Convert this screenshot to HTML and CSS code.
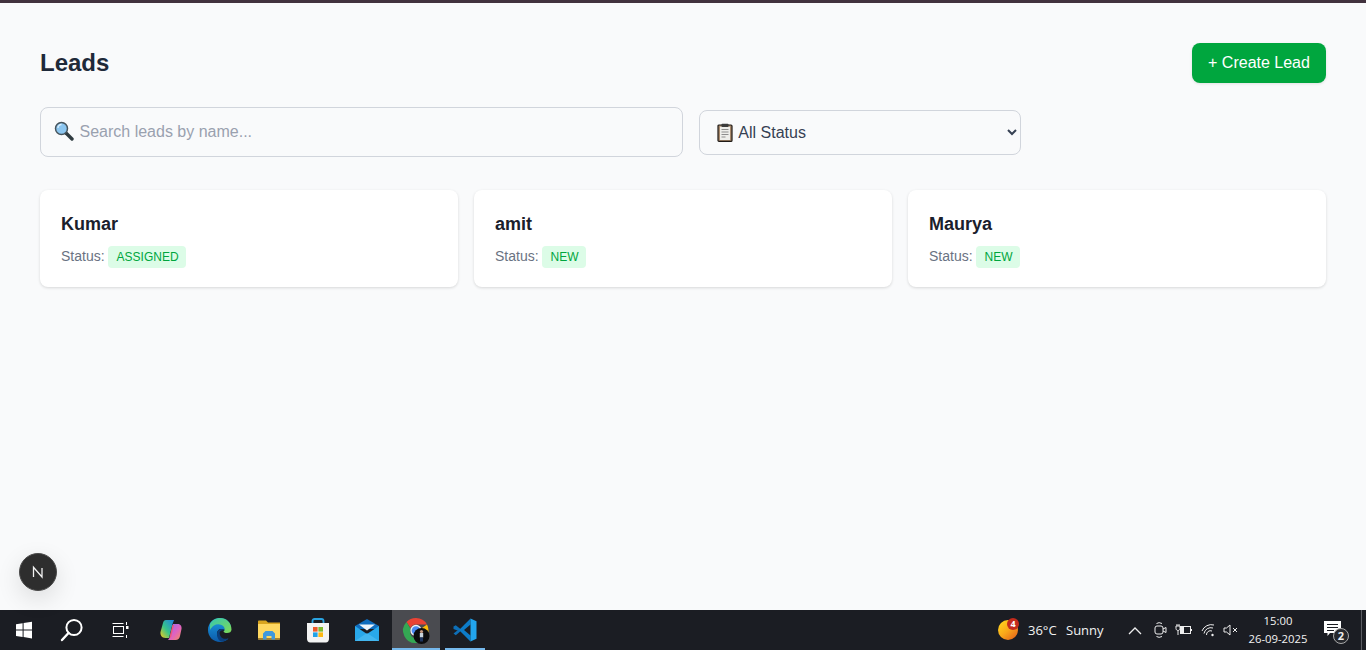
FILE: index.html
```html
<!DOCTYPE html>
<html lang="en">
<head>
<meta charset="utf-8">
<title>Leads</title>
<link rel="stylesheet" href="styles.css">
</head>
<body>
<div class="screen">
  <main class="page">
    <header class="head">
      <h1 class="title">Leads</h1>
      <button class="create">+ Create Lead</button>
    </header>
    <div class="filters">
      <div class="search">
        <svg class="emoji" width="20" height="20" viewBox="0 0 20 20"><path d="M12 12l6 6" stroke="#2f3b40" stroke-width="3.4" stroke-linecap="round"/><circle cx="7.500" cy="7.500" r="6" fill="#8cc6f0" stroke="#46545c" stroke-width="1.500"/><path d="M4 7A3.500 3.500 0 0 1 7.500 3.500" stroke="#d9efff" stroke-width="1.300" fill="none"/></svg>
        <input class="search-input" type="text" placeholder="Search leads by name...">
      </div>
      <div class="status">
        <svg class="emoji clip" width="16" height="19" viewBox="0 0 16 19"><rect x="1" y="2" width="14" height="16.4" rx="1" fill="#a98a6c" stroke="#1f1a16" stroke-width="1.2"/><rect x="3" y="3.6" width="10" height="13.4" fill="#eeeeea"/><rect x="4.5" y="0.8" width="7" height="3.2" rx=".8" fill="#3b3b3b"/><path d="M4.5 6.5h7M4.5 9h7M4.5 11.5h7M4.5 14h4" stroke="#8d8d8d" stroke-width="1.1"/></svg>
        <select class="status-select"><option>All Status</option></select>
      </div>
    </div>
    <section class="cards">
      <article class="card"><h2 class="name">Kumar</h2><p class="line">Status: <span class="badge">ASSIGNED</span></p></article>
      <article class="card"><h2 class="name">amit</h2><p class="line">Status: <span class="badge">NEW</span></p></article>
      <article class="card"><h2 class="name">Maurya</h2><p class="line">Status: <span class="badge">NEW</span></p></article>
    </section>
    <div class="dev"><svg width="14" height="14" viewBox="0 0 14 14"><path d="M2.5 12V2.3L11 12V3" fill="none" stroke="#f2f2f2" stroke-width="1.3"/></svg></div>
  </main>

  <footer class="taskbar">
    <div class="tb" ><svg width="18" height="18" viewBox="0 0 18 18"><path fill="#fff" d="M1 3.2l6.600-1v6.300H1zM8.600 2l8.400-1.300v7.800H8.600zM1 9.600h6.600v6.300l-6.600-1zM8.600 9.600H17v7.800l-8.400-1.300z"/></svg></div>
    <div class="tb"><svg width="24" height="24" viewBox="0 0 24 24"><circle cx="14" cy="9.500" r="7.600" fill="none" stroke="#fff" stroke-width="2"/><path d="M8.500 15L2 22" stroke="#fff" stroke-width="2.400" stroke-linecap="round"/></svg></div>
    <div class="tb tb-last"><svg width="18" height="18" viewBox="0 0 18 18" fill="none" stroke="#fff" stroke-width="1"><path d="M1.500 2.500h11M1.500 15.500h11"/><rect x="2.500" y="5.500" width="10" height="7"/><path d="M15.500 1v3M15.500 14v3"/><rect x="15" y="5" width="2.500" height="3" fill="#fff" stroke="none"/></svg></div>

    <div class="app"><svg width="24" height="24" viewBox="0 0 24 24"><defs><linearGradient id="co1" x1="0" y1="1" x2="1" y2="0"><stop offset="0" stop-color="#f7c91b"/><stop offset=".45" stop-color="#37c48a"/><stop offset="1" stop-color="#1f7fe6"/></linearGradient><linearGradient id="co2" x1="0" y1="0" x2="1" y2="1"><stop offset="0" stop-color="#8f6cf5"/><stop offset=".55" stop-color="#e062c0"/><stop offset="1" stop-color="#f4915a"/></linearGradient></defs><path fill="url(#co1)" d="M7 2h8l-1.500 4-3.500 14H6.500C3 20 1 17 1.500 14L4 5c.4-1.800 1.500-3 3-3z"/><path fill="url(#co2)" d="M14 6h5c2.500 0 4 2.500 3.500 5L21 18c-.5 2.500-2 4-4.500 4H9l1.500-2z"/><path fill="#f0587a" d="M13.500 7l-3 12.500h1.500L15 7z"/></svg></div>
    <div class="app"><svg width="26" height="26" viewBox="0 0 26 26"><defs><linearGradient id="ed1" x1="0" y1="0" x2="1" y2="1"><stop offset="0" stop-color="#36c6b0"/><stop offset="1" stop-color="#7fdc56"/></linearGradient><linearGradient id="ed2" x1="0" y1="0" x2="0" y2="1"><stop offset="0" stop-color="#1b9de2"/><stop offset="1" stop-color="#0c5aa8"/></linearGradient></defs><path fill="url(#ed2)" d="M13 1C6 1 1 6.500 1 13c0 7 5.500 12 12 12 3.500 0 6.500-1.300 8.500-3.500-5 2-11 .5-11.500-4.500-.3-3 2-5 4-5 3 0 6 2 10 1V11C24 5 19 1 13 1z"/><path fill="url(#ed1)" d="M3 7C5 3 9 1 13 1c6 0 11.500 4.500 11.500 11.500 0 2.500-2 3.500-4.500 3.500-2 0-3.500-.6-3.500-1.500 1.500-1 1.500-3 .5-4.500C15 7 10 6.500 7 8.500 5.500 9.500 4 11 3 13z"/><path fill="#0b3f7c" d="M10 17c0-3 2-5 4.500-5 1.200 0 2.300.5 3 1.500-1.500-.5-3-.5-4 .5-1.500 1.500-1 4.500 1 6.500 1.500 1.200 3.500 1.800 7 .8C19 24 15.500 25 13 24c-2-1.500-3-4-3-7z"/></svg></div>
    <div class="app"><svg width="24" height="24" viewBox="0 0 24 24"><path fill="#d9a520" d="M1 3.500C1 3 1.400 2.500 2 2.500h7l2 2h12V8H1z"/><path fill="#ffd861" d="M1 6h22v14.500c0 .5-.4 1-1 1H2c-.6 0-1-.4-1-1z"/><path fill="#a8812f" d="M1 20h22v1.500H1z"/><path fill="#3f98dd" d="M6 21.500v-6l2.500-2.500h7l2.500 2.500v6h-3.500v-3.500h-5v3.500z"/></svg></div>
    <div class="app"><svg width="24" height="26" viewBox="0 0 24 26"><path d="M6.500 7V4c0-1.300 1-2 2-2h7c1 0 2 .7 2 2v3" fill="none" stroke="#2aa3e0" stroke-width="1.800"/><path fill="#f3f3f3" d="M1 6h22v16c0 2-1.300 3.400-3.200 3.400H4.200C2.300 25.400 1 24 1 22z"/><rect x="7" y="10" width="4.600" height="4.600" fill="#ef5a2a"/><rect x="12.400" y="10" width="4.600" height="4.600" fill="#7fba2e"/><rect x="7" y="15.400" width="4.600" height="4.600" fill="#1fa2e8"/><rect x="12.400" y="15.400" width="4.600" height="4.600" fill="#fdb813"/></svg></div>
    <div class="app"><svg width="26" height="24" viewBox="0 0 26 24"><path fill="#0f6cbd" d="M1 8L13 1l12 7v3H1z"/><path fill="#eef4fb" d="M5 6.500h16l-8 6z"/><path fill="#29a8ea" d="M1 8l12 8 12-8v15H1z"/><path fill="#55c0f2" d="M1 23l12-8 12 8z" opacity=".6"/></svg></div>
    <div class="app active-chrome"><svg width="32" height="32" viewBox="-2 -4 32 32"><path fill="#ea4335" d="M14 1a12.500 12.500 0 0 1 11 6.500H14a6 6 0 0 0-5.500 3.500L4.500 5A12.500 12.500 0 0 1 14 1z"/><path fill="#fbbc05" d="M25 7.500A12.500 12.500 0 0 1 15 26l5-8a6 6 0 0 0 0-7z"/><path fill="#34a853" d="M4.500 5A12.500 12.500 0 0 0 15 26l4.500-8a6 6 0 0 1-10.800-6z"/><circle cx="14" cy="13.500" r="5" fill="#4a8af4" stroke="#f2f2f2" stroke-width="1.300"/><circle cx="19.500" cy="19" r="8" fill="#0c0c0e"/><circle cx="19.500" cy="14.500" r="1.600" fill="#c89a80"/><rect x="17.800" y="16" width="3.400" height="4.500" fill="#c8d2dc"/><rect x="18" y="20.500" width="3" height="4" fill="#1e3560"/></svg></div>
    <div class="app active-code"><svg width="26" height="26" viewBox="0 0 26 26"><path fill="#0d6fb8" d="M1.500 9.500l2.300-1.300 5 4-1.500 2-5.800-2.200zM1.500 16.500l5.800-4.400 1.500 1.900-5 4.200z"/><path fill="#0d7cc8" d="M7 13L18.500 1.500v6L12 13l6.500 5.500v6z"/><path fill="#22a5ee" d="M18.500 1.500l6 2.800v17.400l-6 2.800z"/></svg></div>

    <div class="tray">
      <div class="weather"><svg width="24" height="24" viewBox="0 0 24 24"><defs><linearGradient id="sun" x1=".1" y1=".1" x2=".8" y2=".9"><stop offset="0" stop-color="#ffd21c"/><stop offset=".55" stop-color="#f9a61a"/><stop offset="1" stop-color="#e8701a"/></linearGradient></defs><circle cx="10" cy="12" r="10" fill="url(#sun)"/></svg><span class="wbadge">4</span></div>
      <span class="temp">36°C</span>
      <span class="sky">Sunny</span>
      <svg class="t-chev" width="14" height="9" viewBox="0 0 14 9"><path d="M1 8l6-6 6 6" fill="none" stroke="#eee" stroke-width="1.300"/></svg>
      <svg class="t-meet" width="13" height="18" viewBox="0 0 13 18" fill="none" stroke="#eee" stroke-width="1"><path d="M2.500 2.500Q5 .8 8 2.500M2.500 15.500Q5 17.200 8 15.500"/><rect x="1" y="5" width="8" height="8" rx="2"/><path d="M9 8l3-1.500v5L9 10"/></svg>
      <svg class="t-batt" width="17" height="12" viewBox="0 0 17 12" fill="none" stroke="#eee" stroke-width="1"><path d="M1 2v2.500c0 1.200 1 2 2 2s2-.8 2-2V2zM3 6.500V11M2 2V0M4 2V0" /><rect x="5.500" y="2.500" width="10" height="7"/><path d="M16.500 5v2"/><rect x="5.500" y="2.500" width="3" height="7" fill="#eee"/></svg>
      <svg class="t-wifi" width="14" height="13" viewBox="0 0 14 13" fill="none" stroke="#eee" stroke-width="1"><path d="M1 7A10 10 0 0 1 13 1M3 9.500A7 7 0 0 1 12 4M5.500 11A4 4 0 0 1 11 7"/><circle cx="11.500" cy="11" r="1.200" fill="#eee" stroke="none"/></svg>
      <svg class="t-vol" width="15" height="12" viewBox="0 0 15 12" fill="none" stroke="#eee" stroke-width="1"><path d="M1 4h2.500L7 1v10L3.500 8H1zM10 4l4 4M14 4l-4 4"/></svg>
      <div class="clock"><span>15:00</span><span>26-09-2025</span></div>
      <div class="notif"><svg width="18" height="18" viewBox="0 0 18 18"><path fill="#fff" d="M0 1h17v12H6l-2.500 3v-3H0z"/><path stroke="#1a1c22" stroke-width="1" d="M3 4.500h11M3 7.500h11M3 10.500h7"/></svg><span class="nbadge">2</span></div>
      <span class="desk"></span>
    </div>
  </footer>
</div>
</body>
</html>
```
FILE: styles.css
```css
* { box-sizing: border-box; }
html, body { margin: 0; height: 100%; overflow: hidden; }
body { font-family: "Liberation Sans", Arial, sans-serif; background: #f9fafb; }
.screen { height: 650px; display: flex; flex-direction: column; }
.page { flex: 1; position: relative; padding: 40px 40px 0; border-top: 3px solid #42323e; background: #f9fafb; }

.head { display: flex; justify-content: space-between; align-items: center; height: 40px; margin-bottom: 24px; }
.title { margin: 0; font-size: 24px; font-weight: 700; color: #1e2939; }
.create { height: 40px; width: 134px; padding: 0; border: 0; border-radius: 8px; background: #00a63e; color: #fff; font: 16px "Liberation Sans", Arial, sans-serif; box-shadow: 0 1px 3px rgba(0,0,0,.1); }

.filters { display: flex; align-items: center; gap: 16px; width: 981px; margin-bottom: 33px; }
.search { flex: 2; position: relative; height: 50px; }
.status { flex: 1; position: relative; height: 45px; }
.emoji { position: absolute; left: 14px; top: 14px; pointer-events: none; }
.emoji.clip { left: 18px; top: 13px; }
.search-input { width: 100%; height: 100%; padding: 0 14px 0 38.5px; border: 1px solid #d1d5dc; border-radius: 8px; background: #f9fafb; font: 16px "Liberation Sans", Arial, sans-serif; color: #1e2939; outline: none; }
.search-input::placeholder { color: #99a1af; opacity: 1; }
.status-select { width: 100%; height: 100%; padding: 0 0 0 34px; border: 1px solid #d1d5dc; border-radius: 8px; background: #f9fafb; font: 16px "Liberation Sans", Arial, sans-serif; color: #364153; }

.cards { display: grid; grid-template-columns: repeat(3, 1fr); gap: 16px; }
.card { height: 97px; padding: 24px 21px 0; background: #fff; border-radius: 8px; box-shadow: 0 1px 3px rgba(0,0,0,.14); }
.name { margin: 0 0 11px; font-size: 18px; line-height: 21px; font-weight: 700; color: #1a202c; }
.line { margin: 0; display: flex; align-items: flex-start; gap: 3.5px; font-size: 14px; line-height: 20px; color: #6a7282; }
.badge { display: inline-block; height: 22px; padding: 0 7.5px 0 8.5px; border-radius: 4px; background: #dcfce7; color: #00a63e; font-size: 12px; line-height: 22px; }

.dev { position: absolute; left: 19px; top: 550px; width: 38px; height: 38px; display: flex; align-items: center; justify-content: center; border-radius: 50%; background: #2e2e2e; border: 1px solid #4a4a4a; box-shadow: 0 8px 24px rgba(0,0,0,.12); }

.taskbar { height: 40px; flex: none; display: flex; align-items: center; background: #1b1d23; color: #f2f2f2; font-family: "Open Sans", sans-serif; }
.tb { width: 48px; height: 40px; display: flex; align-items: center; justify-content: center; flex: none; }
.tb-last { margin-right: 2px; }
.app { width: 49px; height: 40px; display: flex; align-items: center; justify-content: center; flex: none; }
.active-chrome { width: 48px; margin-left: 1px; background: #4a4b50; border-bottom: 2px solid #76b9ed; }
.active-code { position: relative; }
.active-code::after { content: ""; position: absolute; left: 5px; right: 4px; bottom: 0; height: 2px; background: #76b9ed; }

.tray { margin-left: auto; height: 40px; display: flex; align-items: center; flex: none; }
.weather { position: relative; width: 24px; height: 24px; margin-right: 6px; }
.wbadge { position: absolute; left: 9px; top: 0; width: 12px; height: 12px; border-radius: 50%; background: #c42b1c; color: #fff; font-size: 9px; line-height: 12px; text-align: center; font-weight: 700; }
.temp { font-size: 13px; width: 38px; }
.sky { font-size: 13px; width: 62px; }
.t-chev { margin-right: 12px; }
.t-meet { margin-right: 8px; }
.t-batt { margin-right: 9px; }
.t-wifi { margin-right: 8px; }
.t-vol { margin-right: 2px; }
.clock { width: 76px; display: flex; flex-direction: column; align-items: center; font-size: 11.3px; line-height: 18px; margin-right: 8px; }
.notif { position: relative; width: 26px; height: 24px; padding-top: 2px; margin-right: 11px; }
.nbadge { position: absolute; left: 9px; top: 10px; width: 16px; height: 16px; border-radius: 50%; background: #26282d; border: 1px solid #aaa; color: #eee; font-size: 11px; line-height: 14px; text-align: center; font-weight: 700; }
.desk { width: 1px; height: 40px; background: #5a5c62; margin-right: 4px; }
```
